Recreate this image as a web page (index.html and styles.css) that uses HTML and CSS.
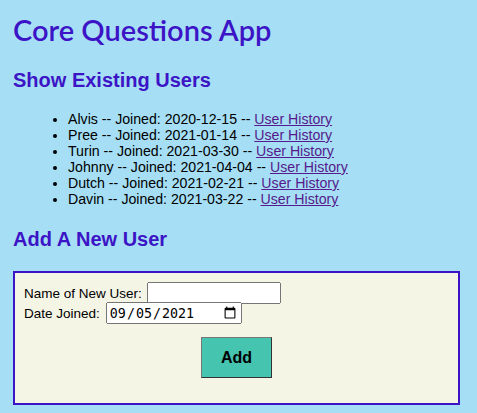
FILE: index.html
```html
<!DOCTYPE html>
<html>
<head>
<meta charset="utf-8">
<link rel="stylesheet" href="styles.css">
</head>
<body>
<div class="app">
  <h1 class="title">Core Questions App</h1>
  <h2 class="section">Show Existing Users</h2>
  <ul class="users">
    <li>Alvis -- Joined: 2020-12-15 -- <a href="#">User History</a></li>
    <li>Pree -- Joined: 2021-01-14 -- <a href="#">User History</a></li>
    <li>Turin -- Joined: 2021-03-30 -- <a href="#">User History</a></li>
    <li>Johnny -- Joined: 2021-04-04 -- <a href="#">User History</a></li>
    <li>Dutch -- Joined: 2021-02-21 -- <a href="#">User History</a></li>
    <li>Davin -- Joined: 2021-03-22 -- <a href="#">User History</a></li>
  </ul>
  <h2 class="section section-add">Add A New User</h2>
  <form class="new-user">
    <div class="row"><label>Name of New User:</label><input type="text" class="name-input"></div>
    <div class="row"><label>Date Joined:</label><input type="date" class="date-input" value="2021-09-05"></div>
    <div class="actions"><button type="button" class="add-btn">Add</button></div>
  </form>
</div>
</body>
</html>
```
FILE: styles.css
```css
html, body {
  background: #a6dff5;
}
body {
  margin: 0;
  font-family: "Liberation Sans", Arial, sans-serif;
  font-size: 14px;
  color: #000;
}
.app {
  padding: 13px 17px 10px 13px;
}
.title {
  font-family: Lato, sans-serif;
  font-weight: 600;
  font-size: 29px;
  color: #3c14c6;
  margin: 0;
  line-height: 34px;
}
.section {
  font-family: "Liberation Sans", Arial, sans-serif;
  font-weight: bold;
  font-size: 20px;
  color: #3c14c6;
  margin: 21px 0 0 0;
  line-height: 24px;
}
.section-add {
  margin-top: 20px;
}
.users {
  margin: 19px 0 0 0;
  padding-left: 55px;
  line-height: 16px;
  font-size: 14.15px;
}
.users a {
  color: #551a8b;
}
.new-user {
  margin-top: 20px;
  background: #f5f5e6;
  border: 2px solid #3c14c6;
  padding: 10px 9px 25px 9px;
}
.row {
  display: flex;
  align-items: center;
  gap: 5px;
  height: 20px;
  font-size: 13.5px;
}
.name-input {
  width: 128px;
  height: 16px;
  padding: 1px 1px;
  margin: 0;
}
.date-input {
  width: 130px;
  height: 16px;
  padding: 1px 1px;
  margin: 0 0 0 1px;
}
.actions {
  display: flex;
  justify-content: center;
  margin-top: 14px;
}
.add-btn {
  width: 71px;
  height: 41px;
  background: #45c4b0;
  border: 1px solid;
  border-color: #777 #333 #333 #777;
  font-family: "Liberation Sans", Arial, sans-serif;
  font-weight: bold;
  font-size: 16px;
  color: #000;
  padding: 0;
}
```
